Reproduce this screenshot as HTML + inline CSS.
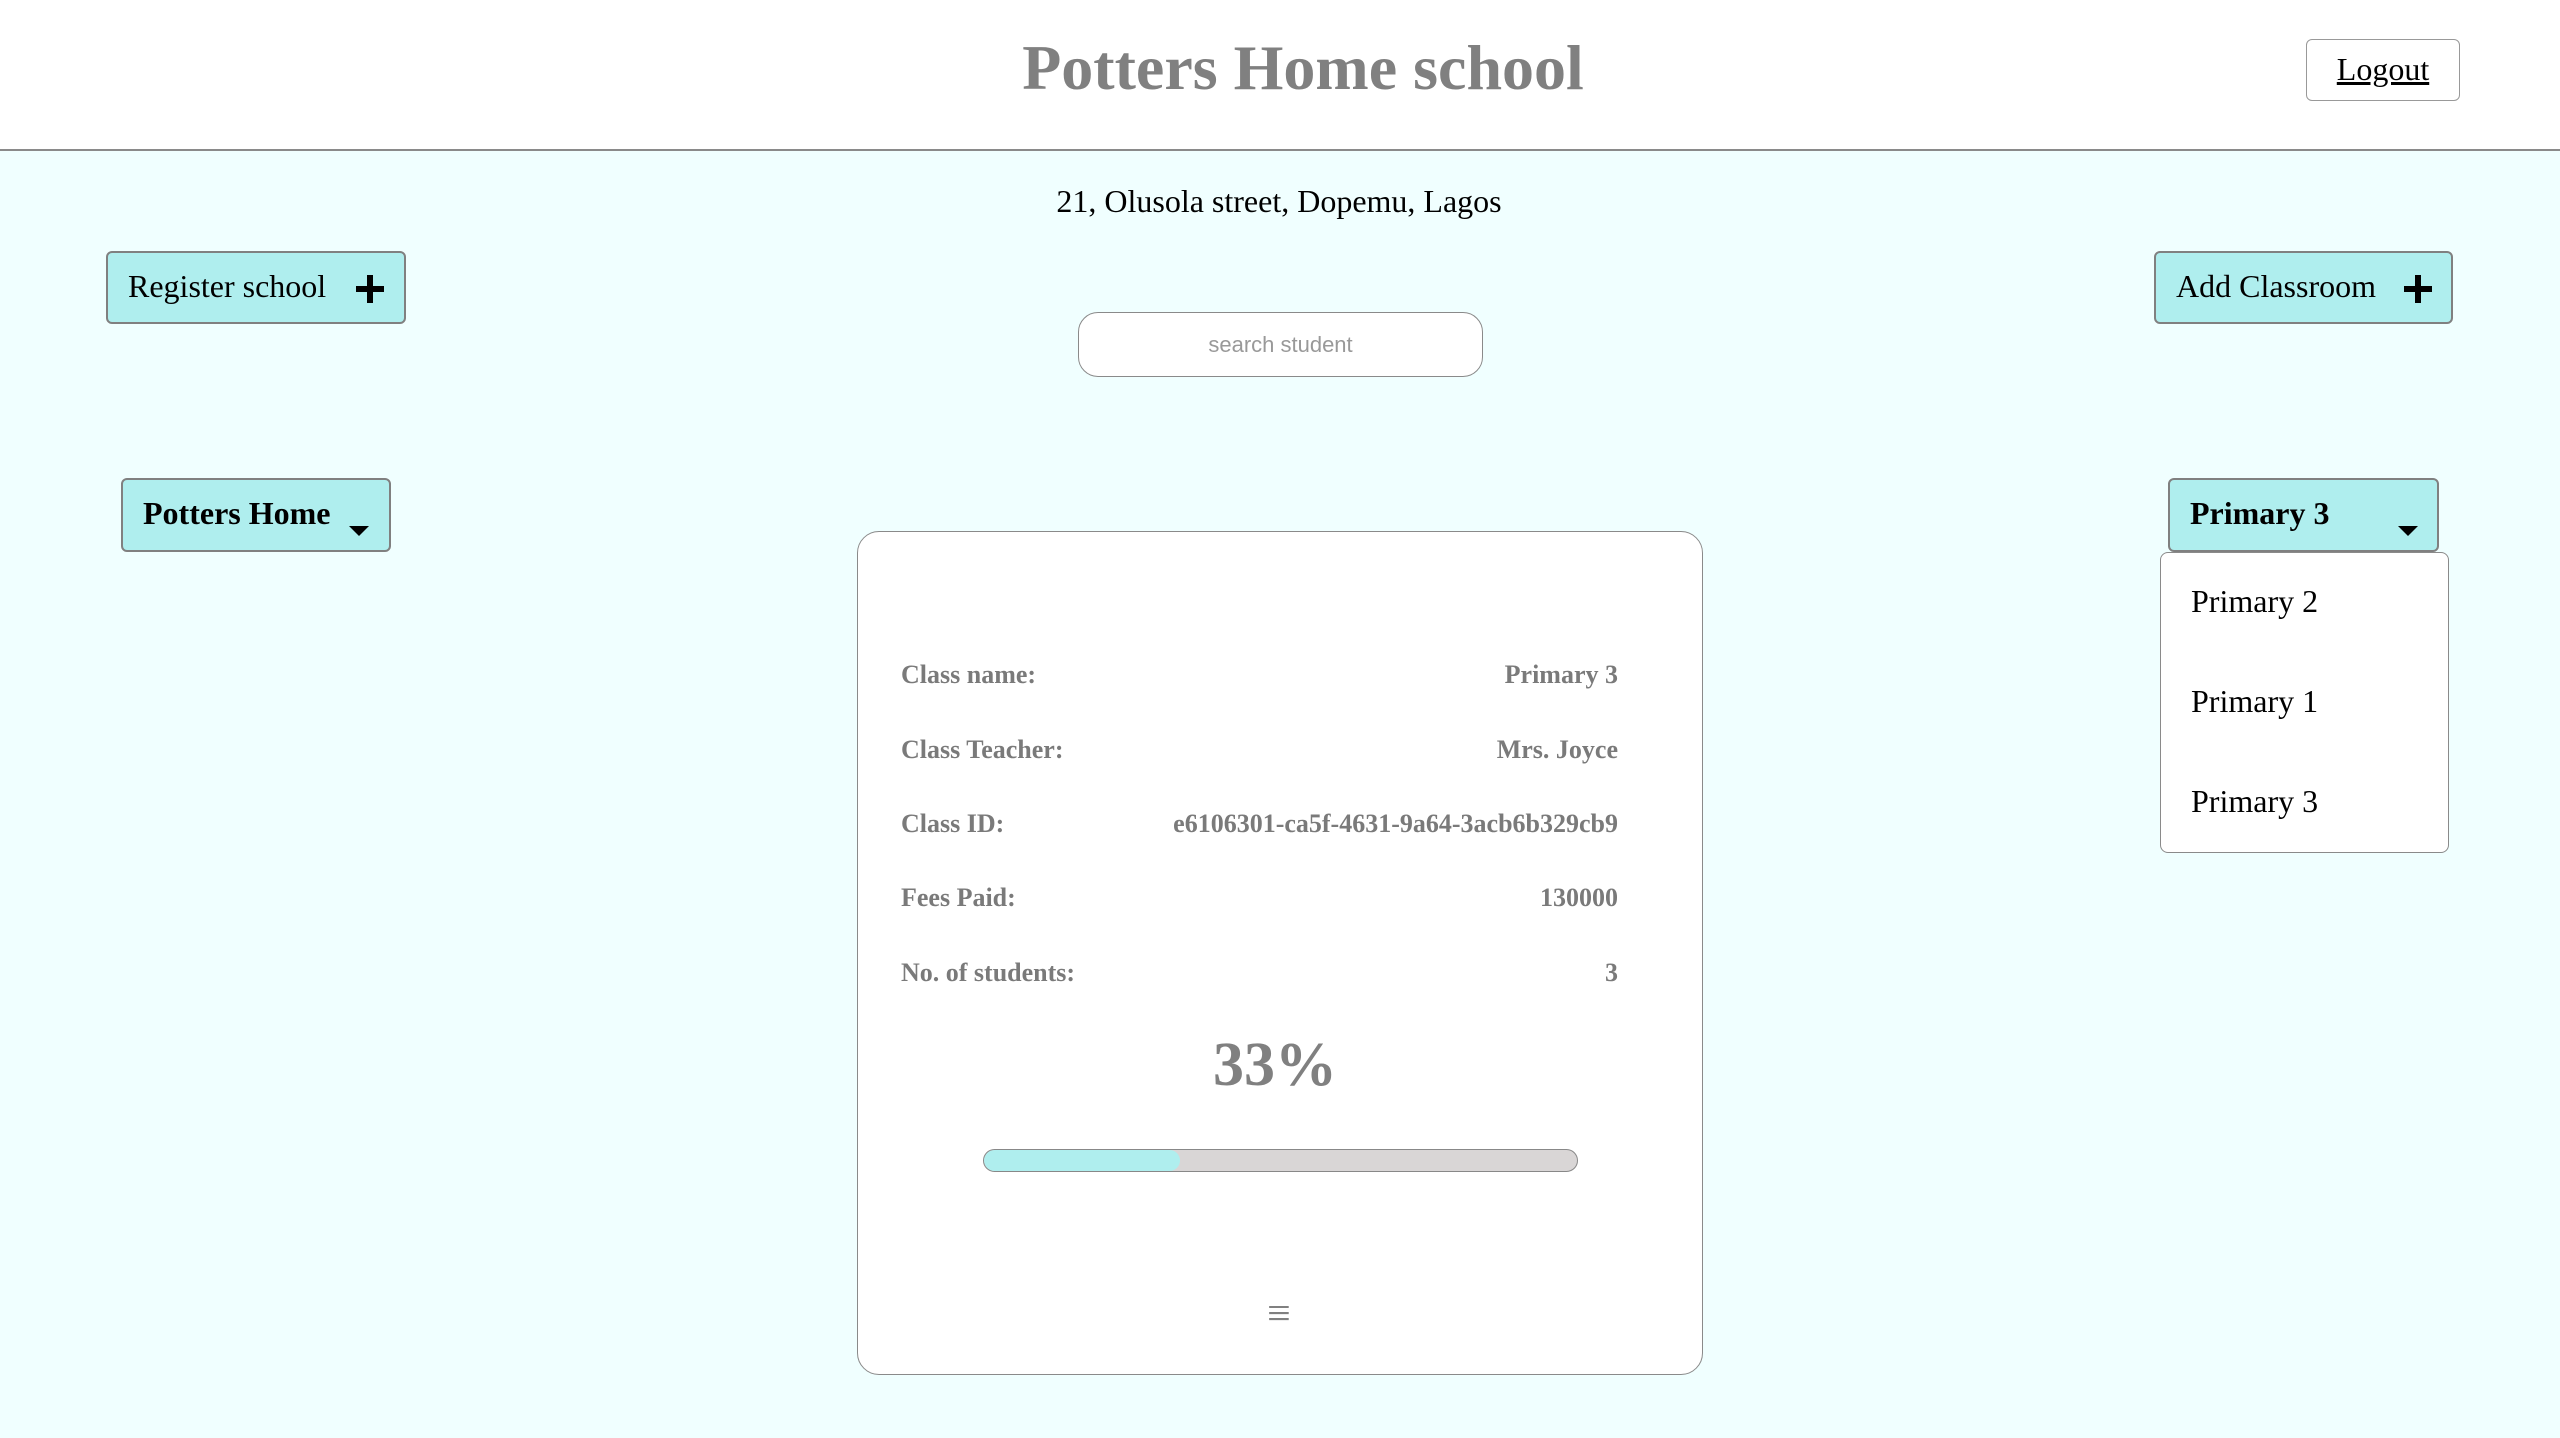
<!DOCTYPE html>
<html><head><meta charset="utf-8"><style>
*{box-sizing:border-box;margin:0;padding:0}
body{width:2560px;height:1438px;background:#f0ffff;font-family:"Liberation Serif",serif;position:relative;overflow:hidden}
.hdr{position:absolute;left:0;top:0;width:2560px;height:151px;background:#fff;border-bottom:2px solid #8a8a8a}
.title{position:absolute;left:0;width:2606px;top:31px;text-align:center;font-weight:bold;font-size:64px;color:#808080}
.logout{position:absolute;left:2306px;top:39px;width:154px;height:62px;border:1.5px solid #999;border-radius:6px;background:#fff;font-size:32px;text-decoration:underline;text-align:center;line-height:58px}
.addr{position:absolute;left:0;width:2558px;top:183px;text-align:center;font-size:32px;color:#000}
.btn{position:absolute;background:#afeeee;border:2px solid #808080;border-radius:6px;font-size:32px;color:#000}
.btn .t{position:absolute;left:20px;top:15px}
.plus{position:absolute;width:28px;height:28px;top:22px}
.plus:before{content:"";position:absolute;left:0;top:11px;width:28px;height:6px;background:#000}
.plus:after{content:"";position:absolute;left:11px;top:0;width:6px;height:28px;background:#000}
.caret{position:absolute;width:0;height:0;border-left:10px solid transparent;border-right:10px solid transparent;border-top:10px solid #000}
.search{position:absolute;left:1078px;top:312px;width:405px;height:65px;border:1.5px solid #8a8a8a;border-radius:20px;background:#fff;text-align:center;line-height:64px;font-family:"Liberation Sans",sans-serif;font-size:22px;color:#999}
.card{position:absolute;left:857px;top:531px;width:846px;height:844px;background:#fff;border:1.5px solid #8a8a8a;border-radius:22px}
.row{position:absolute;left:43px;width:717px;font-weight:bold;font-size:26px;color:#7a7a7a}
.row span{float:right}
.pct{position:absolute;left:8px;width:818px;top:498px;text-align:center;font-weight:bold;font-size:62px;color:#808080}
.bar{position:absolute;left:125px;top:617px;width:595px;height:23px;border:1.5px solid #888;border-radius:12px;background:#d9d6d6;overflow:hidden}
.bar div{width:196px;height:100%;background:#afeeee;border-radius:12px}
.menu{position:absolute;left:0;width:842px;top:758px;text-align:center;font-size:42px;color:#808080;font-family:"Liberation Serif",serif}
.dd{position:absolute;left:2160px;top:552px;width:289px;height:301px;background:#fff;border:1.5px solid #8a8a8a;border-radius:8px;font-size:32px}
.dd div{position:absolute;left:30px}
</style></head><body>
<div class="hdr"><div class="title">Potters Home school</div>
<div class="logout">Logout</div></div>
<div class="addr">21, Olusola street, Dopemu, Lagos</div>
<div class="btn" style="left:106px;top:251px;width:300px;height:73px"><span class="t">Register school</span><span class="plus" style="left:248px"></span></div>
<div class="btn" style="left:2154px;top:251px;width:299px;height:73px"><span class="t">Add Classroom</span><span class="plus" style="left:248px"></span></div>
<div class="search">search student</div>
<div class="btn" style="left:121px;top:478px;width:270px;height:74px;font-weight:bold"><span class="t">Potters Home</span><span class="caret" style="left:226px;top:46px"></span></div>
<div class="btn" style="left:2168px;top:478px;width:271px;height:74px;font-weight:bold"><span class="t">Primary 3</span><span class="caret" style="left:228px;top:46px"></span></div>
<div class="dd"><div style="top:30px">Primary 2</div><div style="top:130px">Primary 1</div><div style="top:230px">Primary 3</div></div>
<div class="card">
<div class="row" style="top:128px">Class name:<span>Primary 3</span></div>
<div class="row" style="top:203px">Class Teacher:<span>Mrs. Joyce</span></div>
<div class="row" style="top:277px">Class ID:<span>e6106301-ca5f-4631-9a64-3acb6b329cb9</span></div>
<div class="row" style="top:351px">Fees Paid:<span>130000</span></div>
<div class="row" style="top:426px">No. of students:<span>3</span></div>
<div class="pct">33%</div>
<div class="bar"><div></div></div>
<div class="menu">≡</div>
</div>
</body></html>
